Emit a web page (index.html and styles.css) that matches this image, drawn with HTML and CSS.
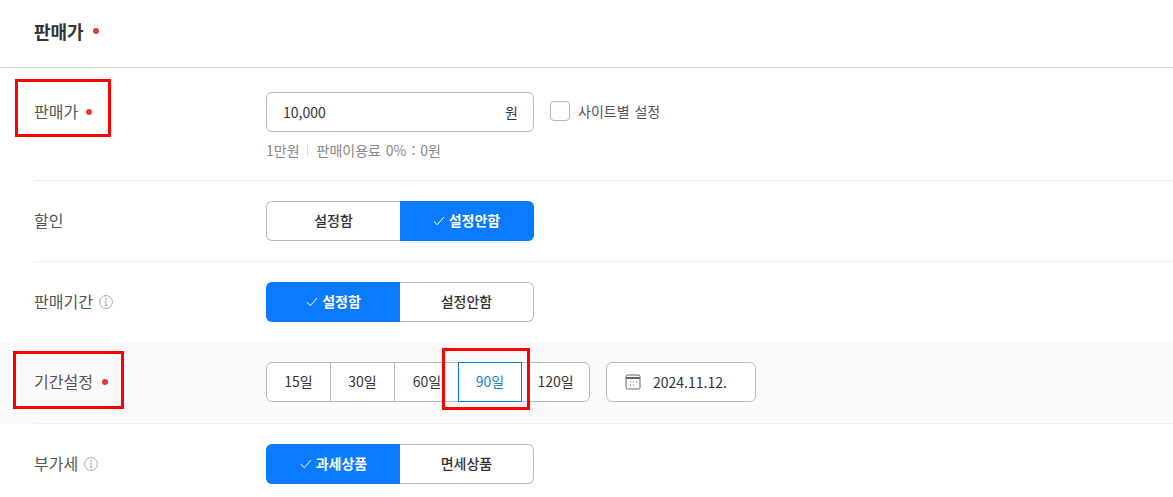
FILE: index.html
```html
<!DOCTYPE html>
<html lang="ko">
<head>
<meta charset="utf-8">
<title>판매가</title>
<link rel="stylesheet" href="styles.css">
</head>
<body>
<main class="page">
  <h2 class="title"><span>판매가</span><i class="dot title-dot"></i></h2>
  <section class="rows">
    <div class="row row-price">
      <div class="label"><span>판매가</span><i class="dot"></i></div>
      <div class="field">
        <div class="inline">
          <div class="input"><span class="value">10,000</span><span class="unit">원</span></div>
          <label class="check"><span class="box"></span><span>사이트별 설정</span></label>
        </div>
        <p class="hint"><span>1만원</span><span class="sep"></span><span>판매이용료 0% : 0원</span></p>
      </div>
    </div>
    <div class="row">
      <div class="label"><span>할인</span></div>
      <div class="segment">
        <button class="seg">설정함</button>
        <button class="seg on"><svg class="tick" viewBox="0 0 12 10"><path d="M1 5.2 4.2 8.8 11 1"/></svg>설정안함</button>
      </div>
    </div>
    <div class="row row-term">
      <div class="label"><span>판매기간</span><svg class="info" viewBox="0 0 14 14"><circle cx="7" cy="7" r="6.4"/><path d="M7 6v4.4M5.6 10.4h2.8M5.8 6H7"/><circle class="pt" cx="7" cy="3.8" r=".9"/></svg></div>
      <div class="segment">
        <button class="seg on"><svg class="tick" viewBox="0 0 12 10"><path d="M1 5.2 4.2 8.8 11 1"/></svg>설정함</button>
        <button class="seg">설정안함</button>
      </div>
    </div>
    <div class="row row-period">
      <div class="label"><span>기간설정</span><i class="dot"></i></div>
      <div class="inline gap16">
        <div class="days">
          <button class="day">15일</button>
          <button class="day">30일</button>
          <button class="day">60일</button>
          <button class="day sel">90일</button>
          <button class="day">120일</button>
        </div>
        <button class="date">
          <svg class="cal" viewBox="0 0 16 16"><rect x="1" y="1" width="14" height="14" rx="1.5"/><path class="band" d="M1 4h14"/><path class="dots" d="M5 8h1M8 8h1M11 8h1M5 11h1M8 11h1"/></svg>
          <span>2024.11.12.</span>
        </button>
      </div>
    </div>
    <div class="row row-last">
      <div class="label"><span>부가세</span><svg class="info" viewBox="0 0 14 14"><circle cx="7" cy="7" r="6.4"/><path d="M7 6v4.4M5.6 10.4h2.8M5.8 6H7"/><circle class="pt" cx="7" cy="3.8" r=".9"/></svg></div>
      <div class="segment">
        <button class="seg on"><svg class="tick" viewBox="0 0 12 10"><path d="M1 5.2 4.2 8.8 11 1"/></svg>과세상품</button>
        <button class="seg">면세상품</button>
      </div>
    </div>
  </section>
  <div class="mark mark-a"></div>
  <div class="mark mark-b"></div>
  <div class="mark mark-c"></div>
</main>
</body>
</html>
```
FILE: styles.css
```css
* { box-sizing: border-box; }
html, body { margin: 0; padding: 0; background: #fff; overflow: hidden; }
body { font-family: "Noto Sans CJK KR", "Noto Sans", sans-serif; color: #333; }
.page { position: relative; width: 1173px; height: 497px; overflow: hidden; }
.title {
  display: flex; align-items: center; height: 68px; margin: 0; padding: 0 0 6px 34px;
  font-size: 18px; font-weight: 700; color: #333; border-bottom: 1px solid #ddd;
}
.dot { display: inline-block; width: 6px; height: 6px; border-radius: 50%; background: #e53935; margin-left: 8px; }
.title-dot { margin-left: 9px; margin-top: 1px; }
.row {
  display: flex; align-items: flex-start; height: 81px; margin-left: 34px; padding-top: 20px;
  border-bottom: 1px solid #eee;
}
.row-price { height: 113px; padding-top: 24px; }
.row-term { height: 80px; border-bottom: 0; }
.row-period { margin-left: 0; padding-left: 34px; background: #fafafa; border-bottom: 0; position: relative; height: 82px; }
.row-period::after { content: ""; position: absolute; left: 34px; right: 0; bottom: 0; height: 1px; background: #eee; }
.row-period .dot { margin-left: 9px; margin-top: 2px; }
.row-price .label .dot { margin-top: 1px; }
.row-last { border-bottom: 0; }
.label { display: flex; align-items: center; width: 232px; height: 38px; font-size: 16px; color: #555; }
.field { display: flex; flex-direction: column; }
.inline { display: flex; align-items: center; }
.gap16 { gap: 16px; }
.input {
  display: flex; align-items: center; justify-content: space-between;
  width: 268px; height: 40px; padding: 0 15px 0 16px;
  background: #fff; border: 1px solid #bbb; border-radius: 6px; font-size: 14px; color: #333;
}
.unit { font-size: 14px; }
.check { display: flex; align-items: center; margin-left: 16px; font-size: 14px; color: #555; gap: 8px; margin-top: -2px; word-spacing: 1px; }
.box { width: 20px; height: 20px; border: 1px solid #bbb; border-radius: 4px; background: #fff; }
.hint { display: flex; align-items: center; margin: 8px 0 0; font-size: 14px; line-height: 20px; color: #888; word-spacing: 1px; }
.sep { width: 1px; height: 12px; background: #ddd; margin: 0 9px 0 7px; }
.segment { display: flex; width: 268px; height: 40px; }
button { font-family: inherit; cursor: pointer; padding: 0; }
.seg {
  display: flex; align-items: center; justify-content: center; flex: 1; padding-bottom: 2px;
  background: #fff; color: #333; border: 1px solid #bbb; font-size: 14px; font-weight: 500;
}
.seg:first-child { border-radius: 6px 0 0 6px; border-right: 0; }
.seg:last-child { border-radius: 0 6px 6px 0; border-left: 0; }
.seg.on { background: #0a7bff; border-color: #0a7bff; color: #fff; font-weight: 700; }
.tick { width: 12px; height: 10px; margin-right: 4px; margin-top: 2px; fill: none; stroke: #fff; stroke-width: 1; }
.info { width: 14px; height: 14px; margin-left: 6px; margin-top: 2px; fill: none; stroke: #aaa; stroke-width: 1; }
.info .pt { fill: #aaa; stroke: none; }
.days { display: flex; width: 324px; height: 40px; background: #fff; border: 1px solid #bbb; border-radius: 6px; }
.day { width: 64px; height: 38px; padding-bottom: 2px; background: none; border: 0; border-right: 1px solid #bbb; font-size: 14px; color: #333; }
.day:nth-child(3) { border-right: 0; }
.day:last-child { border-right: 0; flex: 1; }
.day.sel { width: 64px; height: 40px; margin-top: -1px; margin-left: -1px; border: 1px solid #0a7bd8; color: #1a7fd6; }
.date {
  display: flex; align-items: center; gap: 12px; width: 150px; height: 40px; padding-left: 18px; padding-bottom: 1px;
  background: #fff; border: 1px solid #bbb; border-radius: 6px; font-size: 14px; color: #333;
}
.cal { width: 16px; height: 16px; fill: none; stroke: #666; stroke-width: 1; }
.cal .band { stroke-width: 2; }
.cal .dots { stroke: #666; stroke-dasharray: 1 1; }
.mark { position: absolute; border: 3px solid #f00; background: transparent; }
.mark-a { left: 15px; top: 79px; width: 96px; height: 58px; }
.mark-b { left: 13px; top: 351px; width: 111px; height: 58px; }
.mark-c { left: 442px; top: 348px; width: 88px; height: 62px; }
```
